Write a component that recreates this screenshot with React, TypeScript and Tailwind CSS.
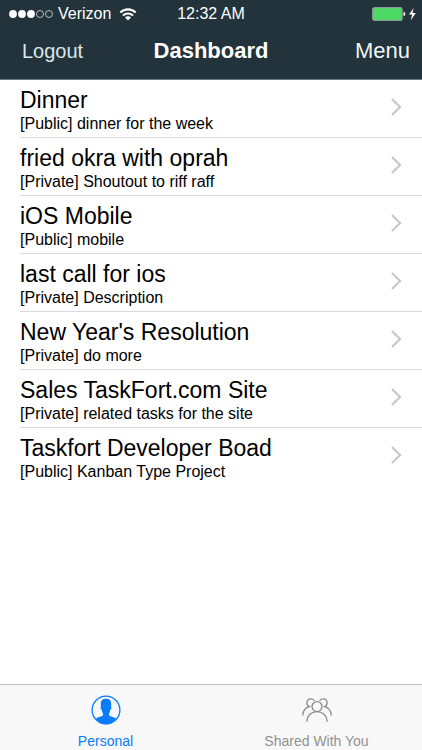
interface Project {
  name: string;
  visibility: "Public" | "Private";
  description: string;
}

const PROJECTS: Project[] = [
  { name: "Dinner", visibility: "Public", description: "dinner for the week" },
  { name: "fried okra with oprah", visibility: "Private", description: "Shoutout to riff raff" },
  { name: "iOS Mobile", visibility: "Public", description: "mobile" },
  { name: "last call for ios", visibility: "Private", description: "Description" },
  { name: "New Year's Resolution", visibility: "Private", description: "do more" },
  { name: "Sales TaskFort.com Site", visibility: "Private", description: "related tasks for the site" },
  { name: "Taskfort Developer Boad", visibility: "Public", description: "Kanban Type Project" },
];

function SignalDots() {
  return (
    <svg width="46" height="10" viewBox="0 0 46 10" aria-hidden="true">
      {[5, 14, 23].map((x) => (
        <circle key={x} cx={x} cy="5" r="3.9" fill="#fff" />
      ))}
      {[32, 41].map((x) => (
        <circle key={x} cx={x} cy="5" r="3.5" fill="none" stroke="#d5dadc" strokeWidth="0.8" />
      ))}
    </svg>
  );
}

function WifiIcon() {
  return (
    <svg width="18" height="13" viewBox="0 0 18 13" fill="none" aria-hidden="true">
      <path d="M1.3 4.6a10.8 10.8 0 0 1 15.4 0" stroke="#fff" strokeWidth="2.1" />
      <path d="M3.9 7.6a7.200 7.200 0 0 1 10.200 0" stroke="#fff" strokeWidth="2" />
      <path d="M9 12.400 6 9.500a4.200 4.200 0 0 1 6 0Z" fill="#fff" />
    </svg>
  );
}

function BatteryIcon() {
  return (
    <svg width="46" height="14" viewBox="0 0 46 14" aria-hidden="true">
      <rect x="0.600" y="0.600" width="29.500" height="12.800" rx="2" fill="#4cd964" stroke="#8c9699" strokeWidth="1.200" />
      <path d="M31.500 4.800c1.200.4 1.800 1.200 1.800 2.200s-.6 1.800-1.800 2.200Z" fill="#fff" />
      <path d="M41.600 1 37 7.600h3.100l-1.300 5.600 5-7.200h-3.300Z" fill="#fff" />
    </svg>
  );
}

function Chevron() {
  return (
    <svg width="12" height="18" viewBox="0 0 12 18" fill="none" className="shrink-0" aria-hidden="true">
      <path d="M2 1 10 9l-8 8" stroke="#c7c7cc" strokeWidth="2.200" />
    </svg>
  );
}

function PersonIcon() {
  return (
    <svg width="30" height="30" viewBox="0 0 30 30" aria-hidden="true">
      <circle cx="15" cy="15" r="13.900" fill="none" stroke="#087cfb" strokeWidth="1.300" />
      <path
        d="M15 3.800c-3.700 0-5.400 2-5.200 5.400l.2 2.400c-.7.200-.5 1.500-.1 2.400.2.600.5.900.9.900.2 1.500.6 2.700 1.200 3.500v1.500c-.4 1.400-4.600 1.800-7.100 3.800C7.400 27.500 11 29.200 15 29.200s7.600-1.700 10.100-5.500c-2.500-2-6.700-2.400-7.100-3.800v-1.500c.6-.8 1-2 1.200-3.500.4 0 .7-.3.9-.9.4-.9.6-2.200-.1-2.400l.2-2.400C20.400 5.800 18.700 3.800 15 3.800Z"
        fill="#087cfb"
      />
    </svg>
  );
}

function PeopleIcon() {
  return (
    <svg width="30" height="24" viewBox="0 0 30 24" fill="none" stroke="#8a8a8a" strokeWidth="1.300" strokeLinecap="round" aria-hidden="true">
      <circle cx="15" cy="8.600" r="5" />
      <path d="M4.800 23.200c.6-5.700 4.700-9.600 10.200-9.600s9.600 3.900 10.200 9.600" />
      <path d="M12 2.200C11.100 1.300 10 .8 8.900.8 6.600.8 4.900 2.500 4.900 4.800c0 1.800 1 3.300 2.500 3.900C3.900 9.500 1.300 12.500.8 17" />
      <path d="M18 2.200c.9-.9 2-1.400 3.100-1.400 2.300 0 4 1.700 4 4 0 1.800-1 3.300-2.500 3.900 3.500.8 6.100 3.800 6.600 8.300" />
    </svg>
  );
}

function StatusBar() {
  return (
    <div className="grid grid-cols-[1fr_auto_1fr] items-center px-2 pt-1 text-base leading-5">
      <div className="flex items-center gap-1">
        <SignalDots />
        <span>Verizon</span>
        <span className="pl-1">
          <WifiIcon />
        </span>
      </div>
      <span className="font-medium">12:32 AM</span>
      <div className="-mr-1 flex justify-end">
        <BatteryIcon />
      </div>
    </div>
  );
}

function ProjectRow({ project }: { project: Project }) {
  return (
    <li className="group pl-5">
      <a href="#" className="flex h-[58px] items-start justify-between border-b border-[#d9d9db] pt-1.5 pr-5 group-last:border-transparent">
        <div>
          <h2 className="text-[23px] leading-7">{project.name}</h2>
          <p className="text-base leading-5">
            [{project.visibility}] {project.description}
          </p>
        </div>
        <span className="pt-3">
          <Chevron />
        </span>
      </a>
    </li>
  );
}

export default function App() {
  return (
    <div className="flex min-h-screen flex-col bg-white font-['Liberation_Sans',Arial,sans-serif] text-black">
      <header className="border-b border-[#6b787e] bg-[#22333b] text-white">
        <StatusBar />
        <nav className="grid grid-cols-[1fr_auto_1fr] items-center px-3 pt-[13px] pb-3.5">
          <button type="button" className="justify-self-start pl-2.5 text-xl leading-7 text-[#dce5ea]">
            Logout
          </button>
          <h1 className="text-[22px] leading-7 font-bold">Dashboard</h1>
          <button type="button" className="justify-self-end text-[22px] leading-7 text-[#f1f5f7]">
            Menu
          </button>
        </nav>
      </header>

      <main className="flex-1">
        <ul>
          {PROJECTS.map((project) => (
            <ProjectRow key={project.name} project={project} />
          ))}
        </ul>
      </main>

      <footer className="grid grid-cols-2 border-t border-[#bfbfbf] bg-[#f8f8f8] pt-2.5 text-sm leading-4">
        <button type="button" className="flex flex-col items-center gap-2 pb-px text-[#087cfb]">
          <PersonIcon />
          Personal
        </button>
        <button type="button" className="flex flex-col items-center gap-2 pb-px text-[#929292]">
          <span className="flex h-[30px] items-center">
            <PeopleIcon />
          </span>
          Shared With You
        </button>
      </footer>
    </div>
  );
}
